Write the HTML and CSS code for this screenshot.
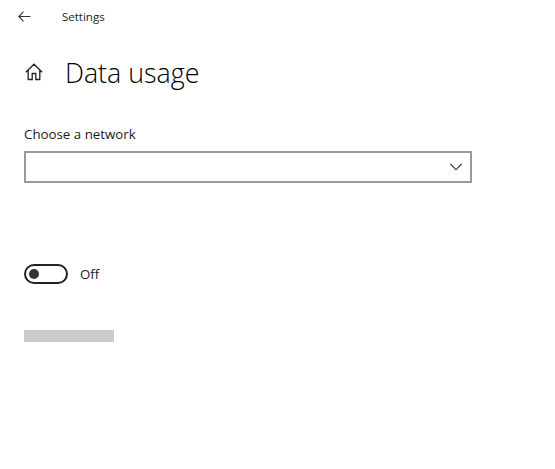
FILE: index.html
```html
<!DOCTYPE html>
<html lang="en">
<head>
  <meta charset="UTF-8" />
  <meta name="viewport" content="width=device-width,initial-scale=1.0" />
  <title>Settings</title>
  <link rel="stylesheet" href="styles.css">
</head>
<body>
  <header class="title-bar">
    <svg class="back-icon" width="13" height="11" viewBox="0 0 13 11" fill="none" stroke="#333" stroke-width="1.1">
      <path d="M12.500 5.500H1M5.500 .6 .8 5.500l4.700 4.900" />
    </svg>
    <span class="title-text">Settings</span>
  </header>

  <main class="content">
    <div class="page-head">
      <svg class="home-icon" width="20" height="20" viewBox="0 0 20 20" fill="none" stroke="#222" stroke-width="1.300">
        <path d="M1.800 10.200 10 2.200l8.200 8M4.200 8v9.500h4v-6h3.600v6h4V8" />
      </svg>
      <h1 class="page-title">Data usage</h1>
    </div>

    <label class="field-label" for="network">Choose a network</label>
    <div class="select-box" id="network">
      <svg class="chevron" width="12" height="8" viewBox="0 0 12 8" fill="none" stroke="#333" stroke-width="1.100">
        <path d="M.5 1 6 6.800 11.500 1" />
      </svg>
    </div>

    <div class="toggle-row">
      <span class="toggle"><span class="knob"></span></span>
      <span class="toggle-label">Off</span>
    </div>

    <div class="placeholder-bar"></div>
  </main>
</body>
</html>
```

FILE: styles.css
```css
* {
  box-sizing: border-box;
}

body {
  margin: 0;
  height: 469px;
  background: #fff;
  color: #1a1a1a;
  font-family: "Open Sans", "Noto Sans", sans-serif;
  overflow: hidden;
}

.title-bar {
  display: flex;
  align-items: center;
  height: 33px;
  padding-left: 18px;
}

.title-text {
  margin-left: 31px;
  font-size: 11.500px;
  color: #222;
}

.content {
  padding-left: 24px;
}

.page-head {
  display: flex;
  align-items: center;
  gap: 21px;
  margin-top: 19px;
  height: 40px;
}

.page-title {
  margin: 0;
  font-size: 26.800px;
  font-weight: 300;
  color: #000;
}

.field-label {
  display: block;
  margin-top: 32px;
  font-size: 13.300px;
  line-height: 20px;
}

.select-box {
  display: flex;
  align-items: center;
  justify-content: flex-end;
  width: 448px;
  height: 32px;
  margin-top: 7px;
  padding-right: 8px;
  border: 2px solid #999;
}

.toggle-row {
  display: flex;
  align-items: center;
  gap: 12px;
  margin-top: 81px;
}

.toggle {
  display: flex;
  align-items: center;
  width: 44px;
  height: 20px;
  padding-left: 3px;
  border: 2px solid #222;
  border-radius: 10px;
}

.knob {
  width: 10px;
  height: 10px;
  border-radius: 50%;
  background: #333;
}

.toggle-label {
  font-size: 13.300px;
}

.placeholder-bar {
  width: 90px;
  height: 12px;
  margin-top: 46px;
  background: #ccc;
}
```
